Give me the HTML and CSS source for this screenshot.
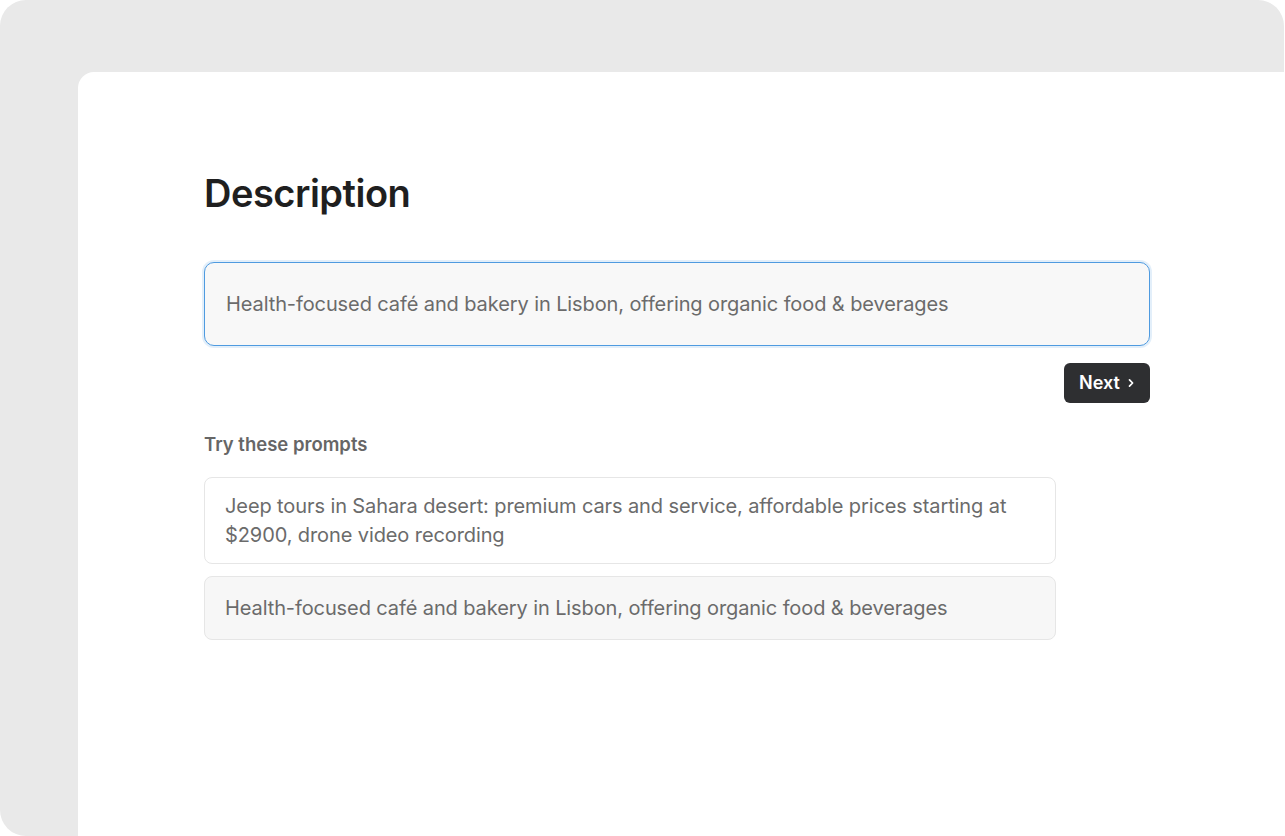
FILE: index.html
```html
<!DOCTYPE html>
<html lang="en">
<head>
<meta charset="utf-8">
<title>Description</title>
<link rel="stylesheet" href="styles.css">
</head>
<body>
<div class="frame">
  <main class="panel">
    <div class="content">
      <h1 class="title">Description</h1>
      <div class="input">Health-focused café and bakery in Lisbon, offering organic food &amp; beverages</div>
      <div class="actions">
        <button class="next">Next <svg class="chev" width="8" height="10" viewBox="0 0 8 10"><path d="M2.5 1.8 5.6 5 2.5 8.2" fill="none" stroke="#fff" stroke-width="1.7" stroke-linecap="round" stroke-linejoin="round"/></svg></button>
      </div>
      <h2 class="sub">Try these prompts</h2>
      <div class="prompts">
        <div class="prompt">Jeep tours in Sahara desert: premium cars and service, affordable prices starting at $2900, drone video recording</div>
        <div class="prompt alt">Health-focused café and bakery in Lisbon, offering organic food &amp; beverages</div>
      </div>
    </div>
  </main>
</div>
</body>
</html>
```
FILE: styles.css
```css
* { box-sizing: border-box; }
html, body { margin: 0; padding: 0; background: #ffffff; }
body {
  font-family: Inter, "Noto Sans", sans-serif;
  width: 1285px;
  height: 836px;
  overflow: hidden;
}
.frame {
  width: 1284px;
  height: 836px;
  background: #e9e9e9;
  border-radius: 26px 26px 0 26px;
  padding: 72px 0 0 78px;
  display: flex;
}
.panel {
  flex: 1;
  background: #ffffff;
  border-radius: 16px 0 0 0;
  margin-right: -1px;
  padding: 98px 0 0 126px;
}
.content {
  width: 946px;
  display: flex;
  flex-direction: column;
}
.title {
  margin: 0;
  font-size: 38px;
  line-height: 46px;
  font-weight: 600;
  letter-spacing: -0.5px;
  color: #1f1f1f;
}
.input {
  margin-top: 46px;
  height: 84px;
  border: 1.5px solid #4f9be0;
  border-radius: 10px;
  background: #f8f8f8;
  box-shadow: 0 0 0 2px rgba(79, 155, 224, 0.16);
  padding: 0 21px;
  display: flex;
  align-items: center;
  font-size: 20px;
  letter-spacing: -0.1px;
  color: #6b6b6b;
}
.actions {
  margin-top: 17px;
  display: flex;
  justify-content: flex-end;
}
.next {
  width: 86px;
  height: 40px;
  border: none;
  border-radius: 6px;
  background: #2e2f31;
  color: #ffffff;
  font-family: inherit;
  font-size: 18px;
  font-weight: 600;
  display: flex;
  align-items: center;
  justify-content: center;
  gap: 7px;
  padding: 0 0 1px 0;
}
.chev { display: block; margin-top: 1px; }
.sub {
  margin: 30px 0 0 0;
  font-size: 18.5px;
  line-height: 22px;
  font-weight: 600;
  color: #666666;
}
.prompts {
  margin-top: 22px;
  width: 852px;
  display: flex;
  flex-direction: column;
  gap: 12px;
}
.prompt {
  min-height: 64px;
  border: 1px solid #e6e6e6;
  border-radius: 8px;
  background: #ffffff;
  padding: 14px 20px 13px;
  display: flex;
  align-items: center;
  font-size: 20px;
  letter-spacing: -0.1px;
  line-height: 29px;
  color: #6b6b6b;
}
.prompt.alt { background: #f7f7f7; }
```
